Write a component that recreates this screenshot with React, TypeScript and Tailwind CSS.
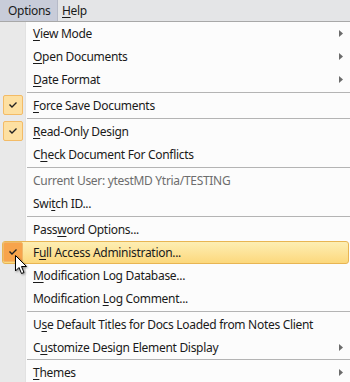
import React from "react";

type Item =
  | { sep: true; h?: number }
  | {
      sep?: false;
      pre: string;
      u: string;
      post: string;
      sub?: boolean;
      check?: boolean;
      hot?: boolean;
      dim?: boolean;
    };

const items: Item[] = [
  { pre: "", u: "V", post: "iew Mode", sub: true },
  { pre: "", u: "O", post: "pen Documents", sub: true },
  { pre: "", u: "D", post: "ate Format", sub: true },
  { sep: true },
  { pre: "", u: "F", post: "orce Save Documents", check: true },
  { sep: true },
  { pre: "", u: "R", post: "ead-Only Design", check: true },
  { pre: "C", u: "h", post: "eck Document For Conflicts" },
  { sep: true },
  { pre: "Current User: ytestMD Ytria/TESTING", u: "", post: "", dim: true },
  { pre: "Swi", u: "t", post: "ch ID..." },
  { sep: true },
  { pre: "Pass", u: "w", post: "ord Options..." },
  { pre: "F", u: "u", post: "ll Access Administration...", check: true, hot: true },
  { pre: "", u: "M", post: "odification Log Database..." },
  { pre: "Modification ", u: "L", post: "og Comment..." },
  { sep: true },
  { pre: "U", u: "s", post: "e Default Titles for Docs Loaded from Notes Client" },
  { pre: "C", u: "u", post: "stomize Design Element Display", sub: true },
  { sep: true, h: 1 },
  { pre: "", u: "T", post: "hemes", sub: true },
];

const Arrow = () => (
  <svg width="4" height="7" viewBox="0 0 4 7" className="absolute right-[7px] top-[8px]">
    <path d="M0 0 L4 3.5 L0 7 Z" fill="#6b6b6b" />
  </svg>
);

const Check = ({ hot }: { hot?: boolean }) => (
  <div
    className={`absolute left-[3px] top-[1px] w-[20px] h-[20px] rounded-[2px] border flex items-center justify-center ${
      hot
        ? "bg-[#f7a44c] border-[#f0b86a]"
        : "bg-[#fde0a2] border-[#f3bb66]"
    }`}
  >
    <svg width="8" height="6" viewBox="0 0 8 6">
      <path d="M0.5 2.5 L3 5 L7.5 0.5" stroke="#222" strokeWidth="1.4" fill="none" />
    </svg>
  </div>
);

const Cursor = () => (
  <svg
    width="14"
    height="22"
    viewBox="0 0 14 22"
    className="absolute left-[15px] top-[14px]"
    style={{ filter: "drop-shadow(1px 1px 1px rgba(0,0,0,0.4))" }}
  >
    <path d="M0.5 0.5 L0.5 16 L4 12.5 L6.5 18.5 L9 17.5 L6.5 11.5 L11.5 11.5 Z" fill="#fff" stroke="#000" strokeWidth="1" />
  </svg>
);

export default function App() {
  return (
    <div
      className="w-[350px] h-[382px] overflow-hidden bg-[#fcfcfc] text-[12px] tracking-[-0.3px] text-[#1a1a1a]"
      style={{ fontFamily: '"Noto Sans", "Open Sans", sans-serif' }}
    >
      <div className="h-[22px] flex bg-[#e4e5e7] border-b border-[#a8a8a8]">
        <div className="w-[58px] h-[21px] bg-[#c8ccd9] border-r border-[#b6bac7] flex items-center pl-[8px]">
          Options
        </div>
        <div className="h-[21px] flex items-center pl-[4px]">
          <span className="underline underline-offset-2">H</span>elp
        </div>
      </div>
      <div className="relative flex flex-col">
        <div className="absolute left-0 top-0 bottom-0 w-[26px] bg-[#e9e9e9] border-r border-[#e2e2e2]" />
        {items.map((it, i) =>
          it.sep ? (
            <div key={i} className={`relative pl-[27px] ${it.h === 1 ? "h-[2px]" : "h-[3px] pt-px"}`}>
              <div className="h-px bg-[#b4b4b4]" />
            </div>
          ) : (
            <div key={i} className="relative h-[23px]">
              {it.hot && (
                <div className="absolute left-[2px] right-[1px] top-0 bottom-0 rounded-[3px] border border-[#e8b553] bg-gradient-to-b from-[#fdeeb3] to-[#fcd87c]" />
              )}
              {it.check && <Check hot={it.hot} />}
              {it.hot && <Cursor />}
              <div
                className={`relative pl-[33px] leading-[23px] whitespace-nowrap ${
                  it.dim ? "text-[#6d6d6d]" : ""
                }`}
              >
                {it.pre}
                {it.u && <span className="underline underline-offset-2">{it.u}</span>}
                {it.post}
              </div>
              {it.sub && <Arrow />}
            </div>
          )
        )}
      </div>
    </div>
  );
}
